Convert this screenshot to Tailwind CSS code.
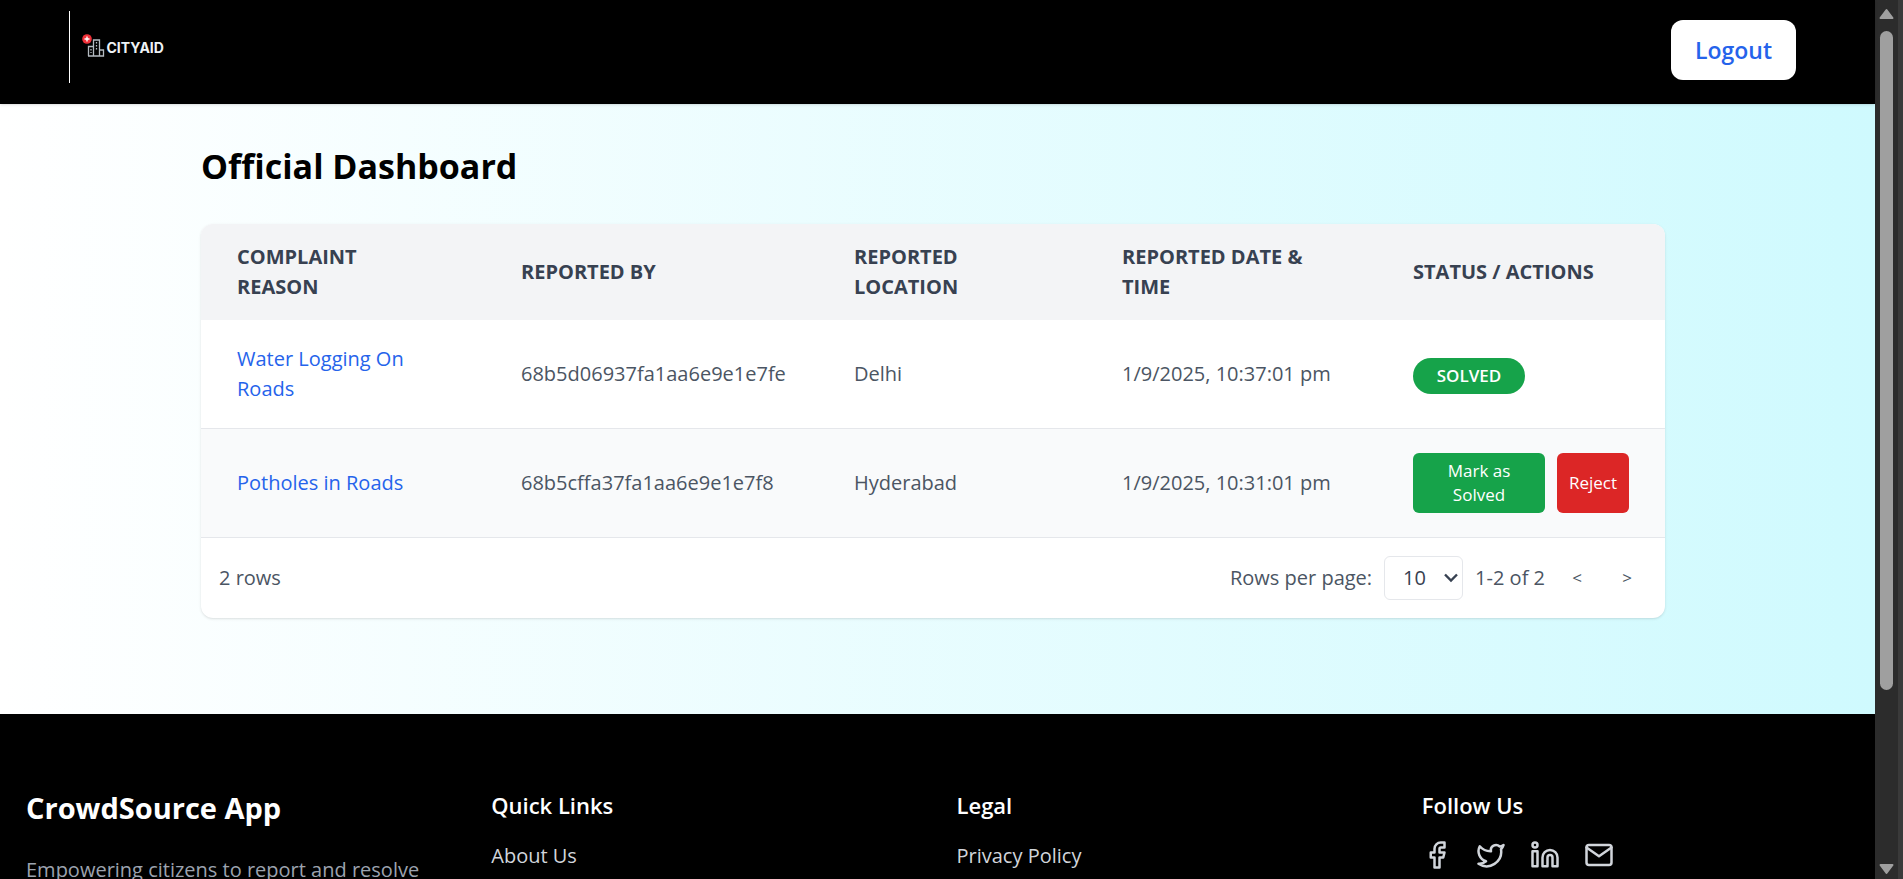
<!DOCTYPE html>
<html lang="en">
<head>
<meta charset="utf-8">
<meta name="viewport" content="width=device-width, initial-scale=1">
<title>Official Dashboard</title>
<script src="https://cdn.jsdelivr.net/npm/@tailwindcss/browser@4"></script>
</head>
<body class="flex h-screen overflow-hidden bg-black font-['Open_Sans','Noto_Sans',sans-serif] text-[20px] leading-[30px]">
<div class="flex min-w-0 flex-1 flex-col">
  <header class="relative z-10 flex h-[104px] shrink-0 items-center justify-between bg-black pr-[79px] pl-[69px] shadow-sm">
    <a href="#" aria-label="CityAid home" class="mb-[10px] flex h-[72px] items-center border-l border-white pb-1 pl-3">
      <svg class="h-6 w-[82px]" viewBox="0 0 82 24" fill="none">
        <g stroke="#b4bbc1" stroke-width="1.300">
          <path d="M6.500 23V13.500h5M6 23h15.500V17h-4M11.500 23V7h6v16"/>
          <path d="M14.500 9v9" stroke-dasharray="1.500 1.500"/>
          <path d="M9 16v4" stroke-dasharray="1.500 1.500"/>
        </g>
        <circle cx="5" cy="6" r="4.800" fill="#ef3038"/>
        <path d="M5 3.500v5M2.500 6h5" stroke="#fff" stroke-width="1.400"/>
        <text x="24.500" y="20" fill="#eef2f5" font-family="Inter, sans-serif" font-weight="700" font-size="14">CITYAID</text>
      </svg>
    </a>
    <button type="button" class="mb-1 h-[60px] w-[125px] rounded-xl bg-white text-[23px] font-semibold text-[#2563eb]">Logout</button>
  </header>

  <main class="h-[610px] shrink-0 bg-linear-to-r from-white to-[#cffafe] px-[201px] pt-10">
    <h1 class="text-[34px] leading-[44px] font-bold text-black">Official Dashboard</h1>
    <section class="mt-9 mr-[9px] overflow-hidden rounded-xl bg-white text-[#4b5563] shadow-sm">
      <table class="w-full table-fixed border-separate border-spacing-0 text-left">
        <colgroup><col class="w-[284px]"><col class="w-[333px]"><col class="w-[268px]"><col class="w-[291px]"><col></colgroup>
        <thead class="bg-[#f3f4f6] text-[#374151] uppercase">
          <tr class="h-24">
            <th scope="col" class="pr-20 pl-9 font-bold">Complaint Reason</th>
            <th scope="col" class="pl-9 font-bold">Reported By</th>
            <th scope="col" class="pr-20 pl-9 font-bold">Reported Location</th>
            <th scope="col" class="pr-9 pl-9 font-bold">Reported Date &amp; Time</th>
            <th scope="col" class="pl-9 font-bold">Status / Actions</th>
          </tr>
        </thead>
        <tbody>
          <tr class="h-[109px] [&>td]:border-b [&>td]:border-gray-200">
            <td class="pr-16 pl-9"><a href="#" class="text-[#2563eb]">Water Logging On Roads</a></td>
            <td class="pl-9">68b5d06937fa1aa6e9e1e7fe</td>
            <td class="pl-9">Delhi</td>
            <td class="pl-9">1/9/2025, 10:37:01 pm</td>
            <td class="pl-9"><span class="mt-1 flex h-9 w-28 items-center justify-center rounded-full bg-[#16a34a] text-[17px] font-semibold text-white">SOLVED</span></td>
          </tr>
          <tr class="h-[109px] bg-[#f9fafb] [&>td]:border-b [&>td]:border-gray-200">
            <td class="pl-9"><a href="#" class="text-[#2563eb]">Potholes in Roads</a></td>
            <td class="pl-9">68b5cffa37fa1aa6e9e1e7f8</td>
            <td class="pl-9">Hyderabad</td>
            <td class="pl-9">1/9/2025, 10:31:01 pm</td>
            <td class="pr-9 pl-9">
              <div class="flex gap-3 text-[17px] leading-6 text-white">
                <button type="button" class="h-[60px] flex-1 rounded-md bg-[#16a34a] px-5">Mark as Solved</button>
                <button type="button" class="h-[60px] w-[72px] rounded-md bg-[#dc2626]">Reject</button>
              </div>
            </td>
          </tr>
        </tbody>
      </table>
      <div class="flex h-20 items-center justify-between px-[18px]">
        <p>2 rows</p>
        <div class="flex items-center">
          <label for="page-size">Rows per page:</label>
          <div class="relative ml-3">
            <select id="page-size" class="h-11 w-[79px] appearance-none rounded-md border border-gray-200 bg-white pl-[18px] text-[#374151]"><option>10</option><option>20</option></select>
            <svg class="pointer-events-none absolute top-4 right-[5px] h-3 w-[14px] text-[#374151]" viewBox="0 0 14 12" fill="none" stroke="currentColor" stroke-width="2.400"><path d="M1 2.500l6 6 6-6"/></svg>
          </div>
          <p class="ml-3">1-2 of 2</p>
          <button type="button" aria-label="Previous page" class="ml-3 w-10 text-[17px]">&lt;</button>
          <button type="button" aria-label="Next page" class="ml-[10px] w-10 text-[17px]">&gt;</button>
        </div>
      </div>
    </section>
  </main>

  <footer class="grid flex-1 grid-cols-4 gap-[38px] bg-black px-[26px] pt-[74px] text-[#d1d5db]">
    <section>
      <h2 class="text-[29px] leading-10 font-bold text-white">CrowdSource App</h2>
      <p class="mt-[27px] whitespace-nowrap text-[#9ca3af]">Empowering citizens to report and resolve</p>
    </section>
    <nav aria-label="Quick links">
      <h3 class="text-[22px] leading-[35px] font-semibold text-white">Quick Links</h3>
      <a href="#" class="mt-[18px] block">About Us</a>
    </nav>
    <nav aria-label="Legal">
      <h3 class="text-[22px] leading-[35px] font-semibold text-white">Legal</h3>
      <a href="#" class="mt-[18px] block">Privacy Policy</a>
    </nav>
    <section>
      <h3 class="text-[22px] leading-[35px] font-semibold text-white">Follow Us</h3>
      <div class="mt-[17px] flex gap-6">
        <a href="#" aria-label="Facebook"><svg class="size-[30px]" viewBox="0 0 24 24" fill="none" stroke="currentColor" stroke-width="2" stroke-linecap="round" stroke-linejoin="round"><path d="M18 2h-3a5 5 0 0 0-5 5v3H7v4h3v8h4v-8h3l1-4h-4V7a1 1 0 0 1 1-1h3z"/></svg></a>
        <a href="#" aria-label="Twitter"><svg class="size-[30px]" viewBox="0 0 24 24" fill="none" stroke="currentColor" stroke-width="2" stroke-linecap="round" stroke-linejoin="round"><path d="M22 4s-.7 2.100-2 3.400c1.600 10-9.400 17.300-18 11.600 2.200.1 4.400-.6 6-2C3 15.500.5 9.600 3 5c2.200 2.600 5.600 4.100 9 4-.9-4.200 4-6.600 7-3.800 1.100 0 3-1.200 3-1.200z"/></svg></a>
        <a href="#" aria-label="LinkedIn"><svg class="size-[30px]" viewBox="0 0 24 24" fill="none" stroke="currentColor" stroke-width="2" stroke-linecap="round" stroke-linejoin="round"><path d="M16 8a6 6 0 0 1 6 6v7h-4v-7a2 2 0 0 0-4 0v7h-4v-7a6 6 0 0 1 6-6z"/><rect x="2" y="9" width="4" height="12"/><circle cx="4" cy="4" r="2"/></svg></a>
        <a href="#" aria-label="Email"><svg class="size-[30px]" viewBox="0 0 24 24" fill="none" stroke="currentColor" stroke-width="2" stroke-linecap="round" stroke-linejoin="round"><rect x="2" y="4" width="20" height="16" rx="2"/><path d="M22 6l-10 7L2 6"/></svg></a>
      </div>
    </section>
  </footer>
</div>

<div aria-hidden="true" class="flex w-7 shrink-0 flex-col items-center justify-between border-r-[5px] border-[#3a3a3a] bg-[#2c2c2c] pt-2 pb-1 text-[#9f9f9f]">
  <svg class="h-3 w-[15px]" viewBox="0 0 15 12" fill="currentColor" stroke="currentColor" stroke-width="2" stroke-linejoin="round"><path d="M7.500 2L13.500 10H1.500z"/></svg>
  <div class="mt-[11px] mb-auto h-[76%] w-[13px] rounded-full bg-[#9f9f9f]"></div>
  <svg class="h-3 w-[15px]" viewBox="0 0 15 12" fill="currentColor" stroke="currentColor" stroke-width="2" stroke-linejoin="round"><path d="M7.500 10L1.500 2h12z"/></svg>
</div>
</body>
</html>
